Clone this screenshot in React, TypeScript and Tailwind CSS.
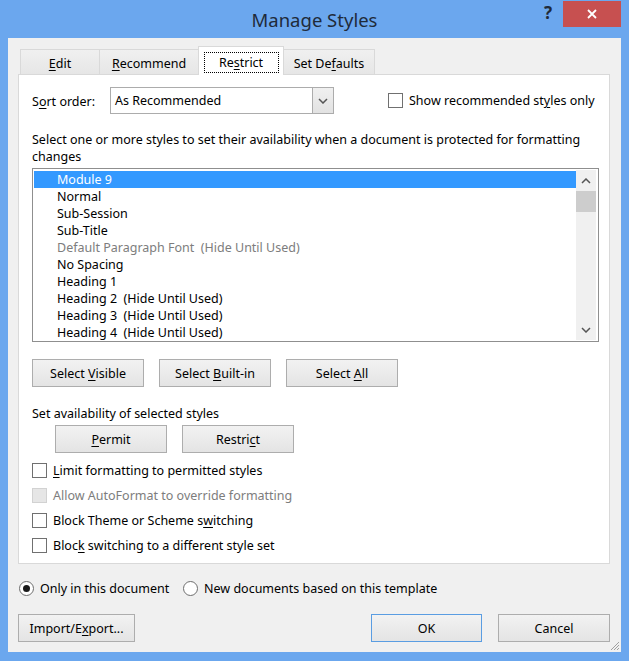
import React from "react";

const U = ({ children }: { children: React.ReactNode }) => (
  <span className="underline underline-offset-[2px] decoration-[1px]">{children}</span>
);

function Btn({
  children,
  className = "",
  primary = false,
}: {
  children: React.ReactNode;
  className?: string;
  primary?: boolean;
}) {
  return (
    <div
      className={`h-[28px] flex items-center justify-center pt-[2px] border bg-linear-to-b from-[#f2f2f2] to-[#e4e4e4] ${
        primary ? "border-[#5a9de2]" : "border-[#adadad]"
      } ${className}`}
    >
      {children}
    </div>
  );
}

function Check({ disabled = false }: { disabled?: boolean }) {
  return (
    <div
      className={`w-[15px] h-[15px] shrink-0 border ${
        disabled ? "border-[#d2d2d2] bg-[#e6e6e6]" : "border-[#707070] bg-white"
      }`}
    />
  );
}

function Radio({ checked = false }: { checked?: boolean }) {
  return (
    <div className="w-[15px] h-[15px] shrink-0 rounded-full border border-[#6e6e6e] bg-white flex items-center justify-center">
      {checked && <div className="w-[7px] h-[7px] rounded-full bg-[#1a1a1a]" />}
    </div>
  );
}

const ChevDown = () => (
  <svg width="10" height="6" viewBox="0 0 10 6">
    <polyline points="1,1 5,5 9,1" fill="none" stroke="#555" strokeWidth="1.5" />
  </svg>
);
const ChevUp = () => (
  <svg width="10" height="6" viewBox="0 0 10 6">
    <polyline points="1,5 5,1 9,5" fill="none" stroke="#555" strokeWidth="1.5" />
  </svg>
);

const rows: { text: string; gray?: boolean; sel?: boolean }[] = [
  { text: "Module 9", sel: true },
  { text: "Normal" },
  { text: "Sub-Session" },
  { text: "Sub-Title" },
  { text: "Default Paragraph Font  (Hide Until Used)", gray: true },
  { text: "No Spacing" },
  { text: "Heading 1" },
  { text: "Heading 2  (Hide Until Used)" },
  { text: "Heading 3  (Hide Until Used)" },
  { text: "Heading 4  (Hide Until Used)" },
];

export default function App() {
  return (
    <div className="w-[629px] h-[661px] bg-[#6ba7ee] flex flex-col font-['Noto_Sans',sans-serif] text-[12.5px] text-black overflow-hidden">
      {/* Title bar */}
      <div className="h-[38px] shrink-0 grid grid-cols-[1fr_auto_1fr]">
        <div />
        <div className="flex items-center justify-center text-[18.5px] text-[#1f2b3a] pt-[1px]">Manage Styles</div>
        <div className="flex justify-end items-start pr-[8px]">
          <div className="mt-[2px] mr-[11px] text-[17px] font-bold leading-[22px] text-[#1f2b3a]">?</div>
          <div className="mt-[1px] w-[58px] h-[26px] bg-[#c75050] flex items-center justify-center">
            <svg width="10" height="10" viewBox="0 0 10 10">
              <path d="M1 1 L9 9 M9 1 L1 9" stroke="#fff" strokeWidth="1.8" />
            </svg>
          </div>
        </div>
      </div>

      {/* Client area */}
      <div className="relative mx-[8px] mb-[9px] flex-1 bg-[#f0f0f0] pl-[10px] pr-[11px] pt-[8px] flex flex-col">
        {/* Tabs */}
        <div className="h-[28px] flex items-end pl-[2px]">
          <div className="w-[80px] h-[25px] border border-b-0 border-[#d9d9d9] bg-linear-to-b from-[#f0f0f0] to-[#e6e6e6] flex items-center justify-center pt-[4px]">
            <span><U>E</U>dit</span>
          </div>
          <div className="-ml-px w-[100px] h-[25px] border border-b-0 border-[#d9d9d9] bg-linear-to-b from-[#f0f0f0] to-[#e6e6e6] flex items-center justify-center pt-[4px]">
            <span><U>R</U>ecommend</span>
          </div>
          <div className="-ml-px relative z-10 -mb-px w-[86px] h-[29px] border border-b-0 border-[#d9d9d9] bg-white flex justify-center">
            <div className="mt-[5px] w-[75px] h-[21px] border border-dotted border-black flex items-center justify-center pt-[1px]">
              <span>Re<U>s</U>trict</span>
            </div>
          </div>
          <div className="-ml-px w-[92px] h-[25px] border border-b-0 border-[#d9d9d9] bg-linear-to-b from-[#f0f0f0] to-[#e6e6e6] flex items-center justify-center pt-[4px]">
            <span>Set De<U>f</U>aults</span>
          </div>
        </div>

        {/* Panel */}
        <div className="h-[490px] shrink-0 border border-[#d9d9d9] bg-white pl-[13px] pr-[10px] pt-[12px] flex flex-col">
          {/* Sort row */}
          <div className="h-[27px] flex items-center">
            <div className="w-[78px] pt-[3px]">S<U>o</U>rt order:</div>
            <div className="w-[224px] h-[27px] border border-[#acacac] flex">
              <div className="flex-1 flex items-center pl-[4px] pt-[2px]">As Recommended</div>
              <div className="w-[21px] border-l border-[#acacac] bg-linear-to-b from-[#f0f0f0] to-[#e2e2e2] flex items-center justify-center">
                <ChevDown />
              </div>
            </div>
            <div className="ml-[54px] flex items-center gap-[6px]">
              <Check />
              <span className="pt-[2px]">Show recommended st<U>y</U>les only</span>
            </div>
          </div>

          {/* Description */}
          <div className="mt-[17px] leading-[17px] whitespace-nowrap">
            Select one or more styles to set their availability when a document is protected for formatting
            <br />
            changes
          </div>

          {/* List */}
          <div className="mt-[3px] h-[174px] shrink-0 border border-[#8f8f8f] flex pl-[1px] pr-[2px] py-[1px]">
            <div className="flex-1 pt-[1px] overflow-hidden">
              {rows.map((r) => (
                <div
                  key={r.text}
                  className={`h-[17px] leading-[17px] pl-[23px] whitespace-pre ${
                    r.sel ? "bg-[#3399ff] text-white" : r.gray ? "text-[#7d7d7d]" : ""
                  }`}
                >
                  {r.text}
                </div>
              ))}
            </div>
            <div className="w-[20px] bg-[#f0f0f0] flex flex-col">
              <div className="h-[21px] flex items-center justify-center">
                <ChevUp />
              </div>
              <div className="h-[21px] bg-[#cdcdcd]" />
              <div className="flex-1" />
              <div className="h-[21px] flex items-center justify-center">
                <ChevDown />
              </div>
            </div>
          </div>

          {/* Select buttons */}
          <div className="mt-[17px] flex gap-[15px]">
            <Btn className="w-[112px]">
              <span>Select <U>V</U>isible</span>
            </Btn>
            <Btn className="w-[112px]">
              <span>Select <U>B</U>uilt-in</span>
            </Btn>
            <Btn className="w-[112px]">
              <span>Select <U>A</U>ll</span>
            </Btn>
          </div>

          <div className="mt-[18px] leading-[17px]">Set availability of selected styles</div>

          <div className="mt-[3px] ml-[23px] flex gap-[15px]">
            <Btn className="w-[112px]">
              <span><U>P</U>ermit</span>
            </Btn>
            <Btn className="w-[112px]">
              <span>Restri<U>c</U>t</span>
            </Btn>
          </div>

          <div className="mt-[5px] flex flex-col">
            <div className="h-[25px] flex items-center gap-[6px]">
              <Check />
              <span className="pt-[2px]"><U>L</U>imit formatting to permitted styles</span>
            </div>
            <div className="h-[25px] flex items-center gap-[6px] text-[#7d7d7d]">
              <Check disabled />
              <span className="pt-[2px]">Allow AutoFormat to override formatting</span>
            </div>
            <div className="h-[25px] flex items-center gap-[6px]">
              <Check />
              <span className="pt-[2px]">Block Theme or Scheme s<U>w</U>itching</span>
            </div>
            <div className="h-[25px] flex items-center gap-[6px]">
              <Check />
              <span className="pt-[2px]">Bloc<U>k</U> switching to a different style set</span>
            </div>
          </div>
        </div>

        {/* Radios */}
        <div className="mt-[14px] h-[20px] flex items-center pl-[1px]">
          <div className="w-[164px] flex items-center gap-[6px]">
            <Radio checked />
            <span className="pt-[2px]">Only in this document</span>
          </div>
          <div className="flex items-center gap-[6px]">
            <Radio />
            <span className="pt-[2px]">New documents based on this template</span>
          </div>
        </div>

        {/* Bottom buttons */}
        <div className="mt-[16px] flex items-center">
          <Btn className="w-[117px]">
            <span>Import/E<U>x</U>port...</span>
          </Btn>
          <div className="ml-auto flex gap-[16px]">
            <Btn className="w-[111px]" primary>
              OK
            </Btn>
            <Btn className="w-[112px]">Cancel</Btn>
          </div>
        </div>

        {/* Size gripper */}
        <svg className="absolute right-[1px] bottom-[1px]" width="10" height="10" viewBox="0 0 10 10">
          <path d="M9 1 L1 9 M9 4 L4 9 M9 7 L7 9" stroke="#a0a0a0" strokeWidth="1" />
        </svg>
      </div>
    </div>
  );
}
